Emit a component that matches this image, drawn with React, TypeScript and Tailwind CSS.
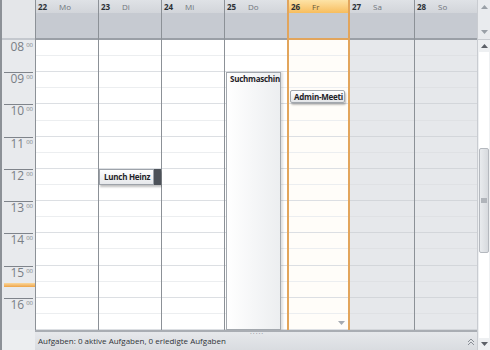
import React from "react";

type Day = { n: string; d: string; kind: "work" | "today" | "weekend" };

const days: Day[] = [
  { n: "22", d: "Mo", kind: "work" },
  { n: "23", d: "Di", kind: "work" },
  { n: "24", d: "Mi", kind: "work" },
  { n: "25", d: "Do", kind: "work" },
  { n: "26", d: "Fr", kind: "today" },
  { n: "27", d: "Sa", kind: "weekend" },
  { n: "28", d: "So", kind: "weekend" },
];

const hours = ["08", "09", "10", "11", "12", "13", "14", "15", "16"];

// grid lines of one day, hour + half hour
const HourRows = ({ weekend }: { weekend?: boolean }) => (
  <div className="absolute inset-0 flex flex-col">
    {hours.map((h) => (
      <div
        key={h}
        className={`flex-1 flex flex-col border-b ${weekend ? "border-[#d3d6da]" : "border-[#dcdfe3]"}`}
      >
        <div className={`flex-1 border-b ${weekend ? "border-[#dfe1e4]" : "border-[#eceef0]"}`} />
        <div className="flex-1" />
      </div>
    ))}
  </div>
);

const Tri = ({ up, className }: { up?: boolean; className?: string }) => (
  <svg width="7" height="4" viewBox="0 0 7 4" className={className}>
    {up ? <path d="M0 4 L3.5 0 L7 4 Z" fill="currentColor" /> : <path d="M0 0 L7 0 L3.5 4 Z" fill="currentColor" />}
  </svg>
);

const eventText = "text-[8px] font-bold text-[#1f2328] leading-none whitespace-nowrap overflow-hidden tracking-[-0.25px]";

const DayColumn = ({ day, index }: { day: Day; index: number }) => {
  const today = day.kind === "today";
  const weekend = day.kind === "weekend";
  const border = today
    ? "border-x-2 border-[#e2a55c]"
    : day.n === "27"
    ? ""
    : "border-l border-[#8c9197]";
  const width = day.n === "27" ? "w-[64px]" : "w-[63px]";

  return (
    <div className={`${width} h-full flex flex-col shrink-0 ${border}`}>
      {/* header */}
      <div
        className={`h-[40px] flex flex-col border-b-2 ${today ? "border-[#e2a55c]" : "border-[#9a9fa6]"}`}
      >
        <div
          className={`h-[13px] flex items-center gap-[11px] pl-[2px] text-[8px] leading-none ${
            today ? "bg-gradient-to-b from-[#fde3a6] to-[#f7bd5c]" : "bg-gradient-to-b from-[#dfe2e6] to-[#d2d5da]"
          }`}
        >
          <span className="font-bold text-[#2b2f35] w-[10px]">{day.n}</span>
          <span className={today ? "text-[#6a5a3a]" : "text-[#6f747b]"}>{day.d}</span>
        </div>
        <div className="flex-1 bg-[#c6cad1]" />
      </div>
      {/* body */}
      <div className={`flex-1 relative ${weekend ? "bg-[#e6e8eb]" : today ? "bg-[#fffdf9]" : "bg-white"}`}>
        <HourRows weekend={weekend} />
        {index === 1 && (
          <div className="absolute left-0 top-[129px] w-[62px] h-[16px] flex shadow-[1px_2px_2px_rgba(0,0,0,0.25)]">
            <div className={`flex-1 border border-[#9ea3aa] bg-gradient-to-b from-white to-[#e6e8eb] flex items-center pl-[4px] ${eventText}`}>
              Lunch Heinz
            </div>
            <div className="w-[7px] bg-[#4d5259]" />
          </div>
        )}
        {index === 3 && (
          <div className={`absolute left-[1px] top-[32px] w-[55px] bottom-0 border border-[#a3a8ae] bg-gradient-to-r from-white to-[#eceef0] shadow-[2px_0_2px_rgba(0,0,0,0.12)] pl-[3px] pt-[2px] ${eventText}`}>
            Suchmaschin
          </div>
        )}
        {today && (
          <>
            <div className={`absolute left-[1px] top-[50px] w-[55px] h-[13px] rounded-[2px] border border-[#a3a8ae] bg-gradient-to-b from-white to-[#e3e5e8] shadow-[1px_2px_2px_rgba(0,0,0,0.25)] flex items-center pl-[3px] ${eventText}`}>
              Admin-Meeti
            </div>
            <Tri className="absolute right-[3px] bottom-[5px] text-[#a6abb2]" />
          </>
        )}
      </div>
    </div>
  );
};

const TimeColumn = () => (
  <div className="w-[35px] h-full flex flex-col shrink-0 border-l-2 border-[#8c9197]">
    <div className="h-[40px] bg-[#e4e6e9] border-b-2 border-[#c4c8ce]" />
    <div className="flex-1 flex flex-col bg-[#e8eaed]">
      {hours.map((h, i) => (
        <div key={h} className="flex-1 relative">
          {i > 0 && <div className="absolute left-[2px] right-[2px] top-0 h-[1px] bg-[#7f848b]" />}
          <div className="absolute right-[2px] top-[1px] flex items-start text-[#7a7f86] leading-none">
            <span className="text-[12px]">{h}</span>
            <span className="text-[6px] ml-[2px] mt-[1px]">00</span>
          </div>
          {h === "15" && (
            <div className="absolute left-[2px] right-0 top-[17px] h-[4px] bg-gradient-to-b from-[#fbd79a] to-[#eea445]" />
          )}
        </div>
      ))}
    </div>
  </div>
);

const Scrollbar = () => (
  <div className="w-[13px] h-full flex flex-col bg-[#eef0f2] border-l border-[#c9ccd1] text-[#5d6168]">
    <div className="h-[40px] flex flex-col items-center justify-between py-[5px] bg-[#e9ebee] border-b border-[#c9ccd1]">
      <Tri up className="text-[#9aa0a7]" />
      <Tri className="text-[#9aa0a7]" />
    </div>
    <div className="h-[12px] flex items-center justify-center">
      <Tri up />
    </div>
    <div className="flex-1 flex flex-col bg-white mx-[1px]">
      <div className="h-[96px]" />
      <div className="h-[105px] rounded-[2px] border border-[#b4b8be] bg-gradient-to-r from-[#e9ebee] to-[#d7dade] flex items-center justify-center">
        <div className="w-[6px] h-[5px] bg-[#b0b4ba]" />
      </div>
      <div className="flex-1" />
    </div>
    <div className="h-[12px] flex items-center justify-center">
      <Tri />
    </div>
  </div>
);

const StatusBar = () => (
  <div className="h-[20px] flex">
    <div className="w-[35px] bg-[#eceef0] border-l-2 border-[#8c9197]" />
    <div className="flex-1 relative flex items-center border-t-2 border-[#a9adb3] bg-gradient-to-b from-[#e6e8eb] to-[#d9dce0] pl-[3px]">
      <span className="text-[8px] text-[#2f3338] leading-none">
        Aufgaben: 0 aktive Aufgaben, 0 erledigte Aufgaben
      </span>
      <span className="absolute left-[215px] -top-[4px] text-[7px] tracking-[1px] text-[#8a8f96] leading-none">
        .....
      </span>
      <svg width="8" height="8" viewBox="0 0 8 8" className="absolute right-[2px] top-[6px] text-[#8a8f96]">
        <path d="M1 4 L4 1 L7 4 M1 7 L4 4 L7 7" fill="none" stroke="currentColor" strokeWidth="1" />
      </svg>
    </div>
  </div>
);

export default function App() {
  return (
    <div className="w-[490px] h-[350px] flex overflow-hidden bg-[#e9ebee] font-['Open_Sans',sans-serif]">
      <div className="w-[477px] h-full flex flex-col">
        <div className="h-[330px] flex">
          <TimeColumn />
          {days.map((d, i) => (
            <DayColumn key={d.n} day={d} index={i} />
          ))}
        </div>
        <StatusBar />
      </div>
      <Scrollbar />
    </div>
  );
}
